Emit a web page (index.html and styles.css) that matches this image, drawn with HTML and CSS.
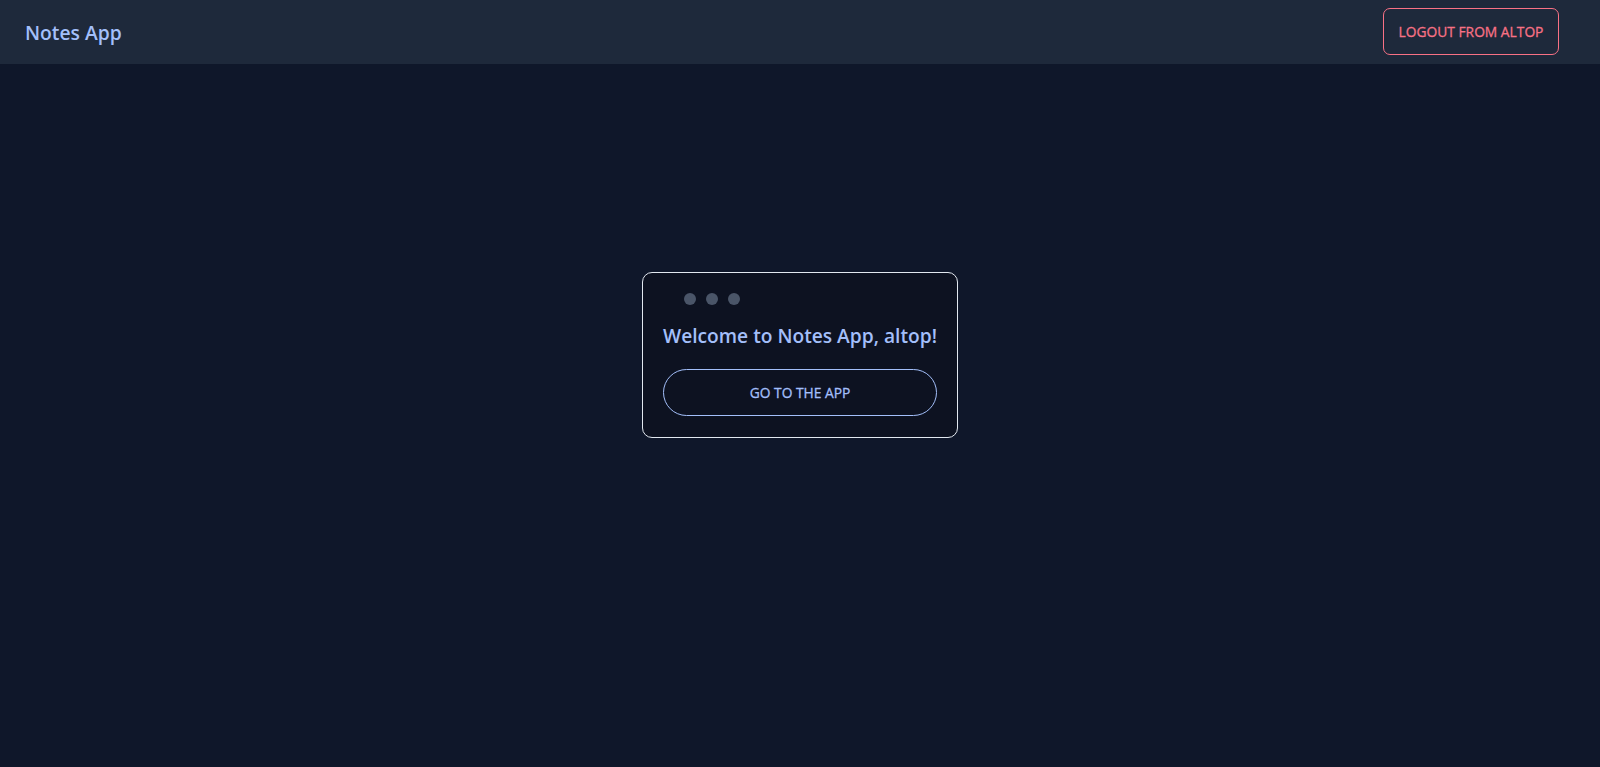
FILE: index.html
```html
<!DOCTYPE html>
<html lang="en">
<head>
<meta charset="utf-8">
<title>Notes App</title>
<link rel="stylesheet" href="styles.css">
</head>
<body>
<header class="topbar">
  <div class="brand">Notes App</div>
  <button class="logout">LOGOUT FROM ALTOP</button>
</header>
<main class="main">
  <section class="card">
    <div class="dots"><span class="dot"></span><span class="dot"></span><span class="dot"></span></div>
    <h1 class="title">Welcome to Notes App, altop!</h1>
    <button class="go">GO TO THE APP</button>
  </section>
</main>
</body>
</html>
```

FILE: styles.css
```css
* { box-sizing: border-box; }
html, body { margin: 0; padding: 0; }
body {
  background: #0f172a;
  font-family: "Open Sans", "Noto Sans", sans-serif;
  min-height: 100vh;
  color: #a3bffa;
}
.topbar {
  height: 64px;
  background: #1e293b;
  display: flex;
  align-items: center;
  justify-content: space-between;
  padding: 0 41px 0 25px;
}
.brand {
  font-size: 19.3px;
  font-weight: 600;
  color: #a3bffa;
}
.logout {
  height: 47px;
  width: 176px;
  background: transparent;
  border: 1px solid #f87185;
  border-radius: 7px;
  color: #f87185;
  font-family: inherit;
  font-size: 13.8px;
  font-weight: 400;
  -webkit-text-stroke: 0.3px currentColor;
  padding: 0;
  margin-top: -1px;
}
.main {
  display: flex;
  justify-content: center;
  padding-top: 208px;
}
.card {
  width: 316px;
  background: #0d1221;
  border: 1px solid #e2e8f0;
  border-radius: 10px;
  padding: 20px 20px 21px;
  display: flex;
  flex-direction: column;
}
.dots {
  display: flex;
  gap: 10px;
  padding-left: 21px;
}
.dot {
  width: 12px;
  height: 12px;
  border-radius: 50%;
  background: #4a5568;
}
.title {
  margin: 18px 0 20px;
  font-size: 19.2px;
  font-weight: 600;
  line-height: 26px;
  color: #a3bffa;
  white-space: nowrap;
}
.go {
  width: 274px;
  height: 47px;
  border: 1px solid #a3bffa;
  border-radius: 24px;
  background: transparent;
  color: #a3bffa;
  font-family: inherit;
  font-size: 13.8px;
  font-weight: 400;
  -webkit-text-stroke: 0.3px currentColor;
  padding: 0;
}
```
